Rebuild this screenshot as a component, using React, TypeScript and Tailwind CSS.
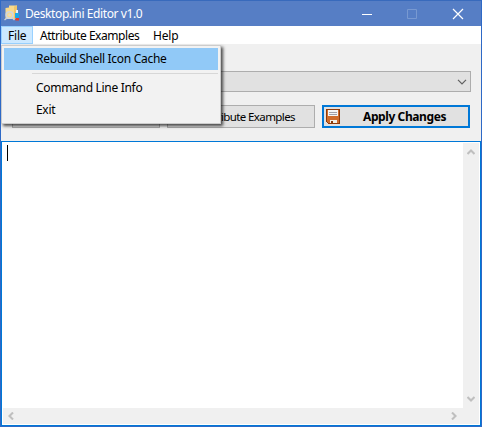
function AppIcon() {
  return (
    <svg className="ml-[3px] h-[17px] w-[17px] shrink-0" viewBox="0 0 17 17">
      <path d="M1.500 3L5 2.500V.5h8V13l-2 1H1.500z" fill="#f8d98c" />
      <path d="M10 1.500l3-1V13l-3 1z" fill="#efc66c" />
      <circle cx="5.500" cy="10" r="3.300" fill="none" stroke="#cfd6de" strokeWidth="1.600" />
      <circle cx="5.500" cy="10" r="1.300" fill="#e6dcc0" />
      <path d="M.5 15l2.500-2M8 12.500l2.500 2.500" stroke="#c9d0d8" strokeWidth="1.500" />
      <rect x="12" y="5" width="2" height="3" fill="#e6f3fa" />
      <rect x="11" y="8" width="4" height="5" fill="#18a8ea" />
      <rect x="11.500" y="13" width="3.500" height="2.500" fill="#e33b2d" />
    </svg>
  );
}

function SaveIcon() {
  return (
    <svg className="h-[15px] w-[14px] shrink-0" viewBox="0 0 14 15" shapeRendering="crispEdges">
      <path d="M0 0h14v15H2L0 13z" fill="#8c3a0b" />
      <path d="M1 1h12v13H2l-1-1z" fill="#cf6c2c" />
      <rect x="2" y="1" width="10" height="6" fill="#f5f5f5" />
      <path d="M3 3.500h8M3 5.500h8" stroke="#a0a0a8" />
      <path d="M4 11h7v3H4z" fill="#f2eee6" />
      <rect x="5" y="12" width="2" height="2" fill="#8c3a0b" />
    </svg>
  );
}

function Arrow({ d }: { d: string }) {
  return (
    <svg className="h-[8px] w-[8px]" viewBox="0 0 8 8">
      <path d={d} fill="none" stroke="#bfbfbf" strokeWidth="2.100" />
    </svg>
  );
}

function FileMenu() {
  return (
    <div className="absolute top-[45px] left-0 h-[79px] w-[220px] border border-[#cccccc] bg-[#f2f2f2] p-[2px] text-[12px] leading-[22px] tracking-[-0.3px] whitespace-nowrap shadow-[2px_2px_3px_rgba(0,0,0,0.7)]">
      <div className="h-[22px] bg-[#91c9f7] pl-[32px]">Rebuild Shell Icon Cache</div>
      <div className="mt-[3px] mb-[3px] ml-[28px] h-px bg-[#d7d7d7]" />
      <div className="h-[22px] pl-[32px]">Command Line Info</div>
      <div className="h-[22px] pl-[32px]">Exit</div>
    </div>
  );
}

export default function App() {
  return (
    <div className="relative flex h-[427px] w-[482px] flex-col overflow-hidden border-x border-b border-[#2e69c6] bg-[#f0f0f0] font-['Noto_Sans','Open_Sans',sans-serif] text-[12px] text-black">
      <header className="flex h-[26px] shrink-0 items-center border-t border-[#386abc] bg-[#567ec5] text-white">
        <AppIcon />
        <span className="ml-[4px] tracking-[-0.4px] whitespace-nowrap">Desktop.ini Editor v1.0</span>
        <svg className="ml-auto h-[12px] w-[102px] shrink-0" viewBox="0 0 102 12">
          <path d="M0 6.500h10" stroke="#fff" />
          <path d="M45.500 1.500h9v9h-9z" fill="none" stroke="#7899d1" />
          <path d="M91 1l10 10M101 1L91 11" stroke="#fff" strokeWidth="1.200" />
        </svg>
        <span className="w-[17px]" />
      </header>
      <nav className="flex h-[18px] shrink-0 bg-white leading-[19px] tracking-[-0.45px] whitespace-nowrap">
        <span className="w-[32px] border border-[#99d1ff] bg-[#cce8ff] pl-[6px] leading-[17px] tracking-[-0.2px]">File</span>
        <span className="ml-[7px] w-[113px]">Attribute Examples</span>
        <span className="tracking-[-0.2px]">Help</span>
      </nav>
      <div className="h-[97px] shrink-0 pt-[27px] pl-[11px]">
        <div className="flex h-[21px] w-[459px] items-center justify-end border border-[#adadad] bg-[#e1e1e1] pr-[3px]">
          <svg className="h-[6px] w-[10px]" viewBox="0 0 10 6">
            <path d="M1 .8l4 4 4-4" fill="none" stroke="#606060" strokeWidth="1.200" />
          </svg>
        </div>
        <div className="mt-[13px] flex gap-[7px] whitespace-nowrap">
          <button className="h-[23px] w-[148px] border border-[#adadad] bg-[#e1e1e1]" />
          <button className="flex h-[23px] w-[148px] justify-end border border-[#adadad] bg-[#e1e1e1] pr-[19px] text-[11.500px] leading-[22px] tracking-[-0.600px]">Attribute Examples</button>
          <button className="flex h-[23px] w-[148px] items-center border-2 border-[#0078d7] bg-[#e1e1e1] pl-[2px] text-[12px] leading-[19px] font-bold tracking-[-0.400px]">
            <SaveIcon />
            <span className="ml-[23px]">Apply Changes</span>
          </button>
        </div>
      </div>
      <main className="flex min-h-0 flex-1 flex-col border border-[#0078d7] bg-white p-px">
        <div className="flex min-h-0 flex-1">
          <div className="flex-1 pt-[2px] pl-[4px]"><div className="h-[16px] w-px bg-black" /></div>
          <div className="flex w-[16px] flex-col items-center justify-between bg-[#f0f0f0] pt-[5px] pb-[5px]">
            <Arrow d="M.5 6L4 2.500 7.500 6" />
            <Arrow d="M.5 2L4 5.500 7.500 2" />
          </div>
        </div>
        <div className="flex h-[16px] shrink-0 items-center justify-between bg-[#f0f0f0] pr-[21px] pl-[4px]">
          <Arrow d="M6 .5L2.500 4 6 7.500" />
          <Arrow d="M2 .5L5.500 4 2 7.500" />
        </div>
      </main>
      <FileMenu />
    </div>
  );
}
